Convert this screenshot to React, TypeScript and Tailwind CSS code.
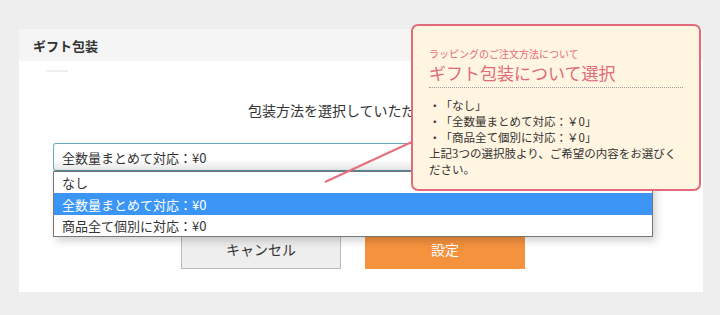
import React from "react";

const jp = { fontFamily: '"Noto Sans CJK JP", "Noto Sans", sans-serif' };

export default function App() {
  return (
    <div
      className="relative w-[720px] h-[315px] overflow-hidden bg-[#eeeeee] pt-[29px] pl-[19px] [text-spacing-trim:space-all]"
      style={jp}
    >
      <div className="w-[684px] h-[263px] bg-white">
        <div className="h-[32px] bg-[#f5f5f5] pl-[14px] flex items-center">
          <span className="text-[13px] font-bold text-[#333] leading-none">ギフト包装</span>
        </div>
        <div className="pl-[27px] pt-[9px]">
          <div className="w-[22px] h-[2px] bg-[#eeeeee]" />
        </div>
        <div className="mt-[28px] pl-[229px] text-[14px] leading-[20px] text-[#333] whitespace-nowrap">
          包装方法を選択していただけます。
        </div>
        <div className="mt-[23px] ml-[34px] w-[599px] h-[28px] rounded-[3px] border border-[#6aabc0] border-b-[#4f8a9a] bg-gradient-to-b from-white from-60% to-[#e6e6e6] flex items-center pl-[8px]">
          <span className="text-[13px] text-[#333] leading-none">全数量まとめて対応：¥0</span>
        </div>
        <div className="mt-[58px] pl-[162px] flex gap-[24px]">
          <div className="w-[160px] h-[40px] bg-[#eeeeee] border border-[#bbbbbb] flex items-center justify-center text-[14px] text-[#333]">
            キャンセル
          </div>
          <div className="w-[160px] h-[40px] bg-[#f5923e] flex items-center justify-center text-[14px] text-white">
            設定
          </div>
        </div>
      </div>

      {/* dropdown list */}
      <div className="absolute left-[53px] top-[171px] w-[600px] bg-white border border-[#777] shadow-[3px_4px_8px_rgba(0,0,0,0.18)] text-[13px] leading-none">
        <div className="h-[21px] flex items-center pl-[8px] text-[#333]">なし</div>
        <div className="h-[22px] flex items-center pl-[8px] bg-[#3b95f5] text-white">全数量まとめて対応：¥0</div>
        <div className="h-[21px] flex items-center pl-[8px] text-[#333]">商品全て個別に対応：¥0</div>
      </div>

      {/* connector line */}
      <svg className="absolute left-0 top-0" width="720" height="315">
        <line x1="325" y1="182" x2="414" y2="141" stroke="#e5707f" strokeWidth="2" />
      </svg>

      {/* tooltip */}
      <div className="absolute left-[411px] top-[24px] w-[290px] h-[167px] rounded-[7px] border-2 border-[#e16a7b] bg-[#fff5e0] pl-[16px] pr-[16px] pt-[22px]">
        <div className="text-[10px] leading-[12px] text-[#e46c7e] whitespace-nowrap">ラッピングのご注文方法について</div>
        <div className="mt-[3px] text-[17px] leading-[20px] text-[#e16a7b] whitespace-nowrap">ギフト包装について選択</div>
        <div className="mt-[4px] w-[254px] border-t border-dotted border-[#999]" />
        <div className="mt-[9px] text-[11.5px] leading-[16px] text-[#333] w-[252px]">
          <div>・「なし」</div>
          <div>・「全数量まとめて対応：￥0」</div>
          <div>・「商品全て個別に対応：￥0」</div>
          <div>上記3つの選択肢より、ご希望の内容をお選びください。</div>
        </div>
      </div>
    </div>
  );
}
